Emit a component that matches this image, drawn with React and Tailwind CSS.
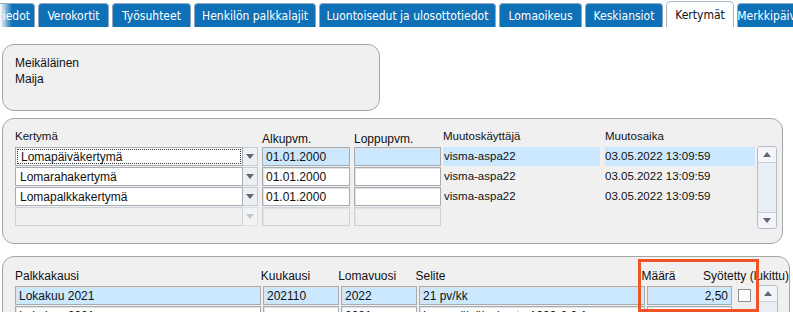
import React from 'react';

const tabs = [
  { label: 'iedot', w: 'w-[35px]', first: true },
  { label: 'Verokortit', w: 'w-[71px]' },
  { label: 'Työsuhteet', w: 'w-[79px]' },
  { label: 'Henkilön palkkalajit', w: 'w-[122px]' },
  { label: 'Luontoisedut ja ulosottotiedot', w: 'w-[177px]' },
  { label: 'Lomaoikeus', w: 'w-[83px]' },
  { label: 'Keskiansiot', w: 'w-[78px]' },
  { label: 'Kertymät', w: 'w-[68px]', active: true },
  { label: 'Merkkipäivät', w: 'w-[70px]' },
];

const Tab = ({ tab }) => {
  if (tab.active) {
    return (
      <div className={`${tab.w} shrink-0 h-[26px] rounded-t-[5px] border border-b-0 border-[#a9b6c4] bg-white text-[#111] flex items-center justify-center`}>
        {tab.label}
      </div>
    );
  }
  return (
    <div
      className={`${tab.w} shrink-0 h-[24px] rounded-t-[4px] border border-b-0 border-[#8fa9c2] bg-[#0e70b6] text-white flex items-center overflow-hidden whitespace-nowrap relative ${
        tab.first ? 'justify-end pr-[4px] rounded-tl-none border-l-0' : 'justify-center'
      }`}
    >
      {tab.first && (
        <div className="absolute left-0 top-0 h-full w-[12px] bg-gradient-to-r from-white to-transparent" />
      )}
      {tab.label}
    </div>
  );
};

const Arrow = ({ up, light }) => (
  <svg width="8" height="5" viewBox="0 0 8 5">
    <path d={up ? 'M0 5 L4 0 L8 5 Z' : 'M0 0 L4 5 L8 0 Z'} fill={light ? '#c3c8ce' : '#5f6873'} />
  </svg>
);

const Scrollbar = ({ h }) => (
  <div className={`w-[20px] ${h} shrink-0 flex flex-col border border-[#b4bcc6] rounded-[3px] bg-[#e9eef4] overflow-hidden`}>
    <div className="h-[16px] shrink-0 flex items-center justify-center border-b border-[#c9d0d8] bg-[#f3f5f8]">
      <Arrow up />
    </div>
    <div className="flex-1" />
    <div className="h-[16px] shrink-0 flex items-center justify-center border-t border-[#c9d0d8] bg-[#f3f5f8]">
      <Arrow />
    </div>
  </div>
);

const Input = ({ w, value = '', tone = 'white', right }) => {
  const bg =
    tone === 'blue' ? 'bg-[#cce8ff]' : tone === 'grey' ? 'bg-[#f0f0f0] border-[#cfd3d7]' : 'bg-white';
  return (
    <div
      className={`${w} h-[19px] shrink-0 border border-[#a7acb2] shadow-[inset_1px_1px_0_#e2e2e2] ${bg} px-[3px] flex items-center overflow-hidden whitespace-nowrap ${
        right ? 'justify-end' : ''
      }`}
    >
      {value}
    </div>
  );
};

const Combo = ({ value, focused, disabled }) => (
  <div className="w-[243px] h-[19px] shrink-0 flex">
    <div
      className={`w-[228px] h-full border ${
        disabled ? 'border-[#cfd3d7] bg-[#f0f0f0]' : 'border-[#a7acb2] bg-white'
      } p-[1px] flex`}
    >
      <div className={`flex-1 flex items-center pl-[3px] ${focused ? 'border border-dotted border-[#333]' : ''}`}>
        {value}
      </div>
    </div>
    <div
      className={`w-[15px] h-full border border-l-0 ${
        disabled ? 'border-[#dde0e3] bg-[#f2f3f5]' : 'border-[#c6ccd3] bg-[#eceff3]'
      } flex items-center justify-center`}
    >
      <Arrow light={disabled} />
    </div>
  </div>
);

const kertymat = [
  { name: 'Lomapäiväkertymä', alku: '01.01.2000', user: 'visma-aspa22', time: '03.05.2022 13:09:59', sel: true },
  { name: 'Lomarahakertymä', alku: '01.01.2000', user: 'visma-aspa22', time: '03.05.2022 13:09:59' },
  { name: 'Lomapalkkakertymä', alku: '01.01.2000', user: 'visma-aspa22', time: '03.05.2022 13:09:59' },
  { name: '', disabled: true },
];

const App = () => {
  return (
    <div className="w-[793px] h-[312px] bg-white overflow-hidden relative text-[12px] text-[#111] font-['Liberation_Sans',Arial,sans-serif]">
      {/* tab strip */}
      <div className="flex items-end gap-[3px] h-[27px] pt-[1px] font-['DejaVu_Sans_Condensed','DejaVu_Sans',sans-serif] text-[12px]">
        {tabs.map((t) => (
          <Tab key={t.label} tab={t} />
        ))}
      </div>

      {/* person */}
      <div className="mt-[17px] ml-[2px] w-[378px] h-[67px] rounded-[12px] border border-[#a6a6a6] bg-[#f0f0f0] pl-[12px] pt-[10px] leading-[16px]">
        <div>Meikäläinen</div>
        <div>Maija</div>
      </div>

      {/* kertymät */}
      <div className="mt-[7px] ml-[2px] w-[781px] h-[126px] rounded-[12px] border border-[#a6a6a6] bg-[#f0f0f0] pl-[12px] pt-[10px]">
        <div className="flex h-[17px] leading-[15px]">
          <div className="w-[247px] text-[11.5px]">Kertymä</div>
          <div className="w-[92px] pt-[3px]">Alkupvm.</div>
          <div className="w-[89px] pt-[3px]">Loppupvm.</div>
          <div className="w-[162px] text-[11.5px]">Muutoskäyttäjä</div>
          <div className="text-[11.5px]">Muutosaika</div>
        </div>
        <div className="flex">
          <div className="flex flex-col gap-[1px] pt-[1px]">
            {kertymat.map((r, i) => (
              <div key={i} className="flex h-[19px]">
                <Combo value={r.name} focused={r.sel} disabled={r.disabled} />
                <div className="w-[4px]" />
                <Input w="w-[88px]" value={r.alku} tone={r.sel ? 'blue' : r.disabled ? 'grey' : 'white'} />
                <div className="w-[4px]" />
                <Input w="w-[87px]" tone={r.sel ? 'blue' : r.disabled ? 'grey' : 'white'} />
                <div className="w-[2px]" />
                <div className={`w-[157px] flex items-center pl-[1px] text-[11.5px] ${r.sel ? 'bg-[#cce8ff]' : ''}`}>{r.user}</div>
                <div className="w-[5px]" />
                <div className={`w-[150px] flex items-center text-[11.5px] ${r.sel ? 'bg-[#cce8ff]' : ''}`}>{r.time}</div>
              </div>
            ))}
          </div>
          <div className="w-[2px]" />
          <Scrollbar h="h-[83px]" />
        </div>
      </div>

      {/* palkkakaudet */}
      <div className="mt-[12px] ml-[2px] w-[788px] h-[80px] rounded-[12px] border border-[#a6a6a6] bg-[#f0f0f0] pl-[12px] pt-[11px]">
        <div className="flex h-[17px] leading-[16px] whitespace-nowrap">
          <div className="w-[248px]">Palkkakausi</div>
          <div className="w-[78px]">Kuukausi</div>
          <div className="w-[78px]">Lomavuosi</div>
          <div className="w-[228px]">Selite</div>
          <div className="w-[62px]">Määrä</div>
          <div>Syötetty (lukittu)</div>
        </div>
        <div className="flex">
          <div className="flex flex-col gap-[1px] pt-[1px]">
            <div className="flex h-[19px]">
              <Input w="w-[246px]" value="Lokakuu 2021" tone="blue" />
              <div className="w-[2px]" />
              <Input w="w-[76px]" value="202110" tone="blue" />
              <div className="w-[2px]" />
              <Input w="w-[76px]" value="2022" tone="blue" />
              <div className="w-[2px]" />
              <Input w="w-[226px]" value="21 pv/kk" tone="blue" />
              <div className="w-[2px]" />
              <Input w="w-[85px]" value="2,50" tone="blue" right />
              <div className="w-[6px]" />
              <div className="w-[20px] flex items-center">
                <div className="w-[13px] h-[13px] border border-[#8e8f8f] bg-white" />
              </div>
            </div>
            <div className="flex h-[19px]">
              <Input w="w-[246px]" value="Lokakuu 2021" />
              <div className="w-[2px]" />
              <Input w="w-[76px]" value="" />
              <div className="w-[2px]" />
              <Input w="w-[76px]" value="2021" />
              <div className="w-[2px]" />
              <Input w="w-[226px]" value="Lomapäivälaskenta 1999-2.0.1" />
              <div className="w-[2px]" />
              <Input w="w-[85px]" value="0,00" right />
              <div className="w-[6px]" />
              <div className="w-[20px] flex items-center">
                <div className="w-[13px] h-[13px] border border-[#8e8f8f] bg-white" />
              </div>
            </div>
          </div>
          <Scrollbar h="h-[60px]" />
        </div>
      </div>

      {/* highlight */}
      <div className="absolute left-[638px] top-[259px] w-[121px] h-[53px] border-[3px] border-[#f05426] pointer-events-none" />
    </div>
  );
};

export default App;
